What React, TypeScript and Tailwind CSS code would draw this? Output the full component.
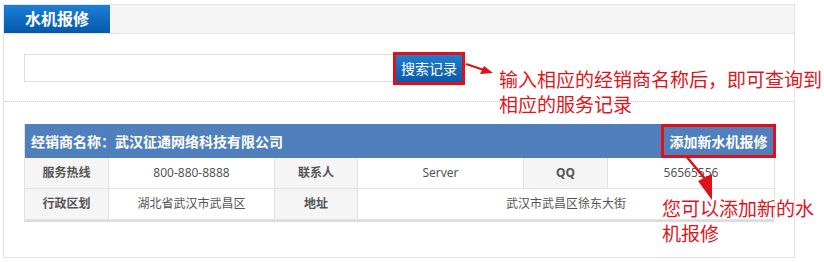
import React from "react";

const font = { fontFamily: '"Noto Sans", "Noto Sans CJK SC", sans-serif' };

function Label({ children }: { children: React.ReactNode }) {
  return (
    <div className="flex items-center justify-center bg-[#f5f5f5] border-r border-b border-[#e2e2e2] text-[12px] font-bold text-[#555]">
      {children}
    </div>
  );
}

function Value({ children, span }: { children: React.ReactNode; span?: boolean }) {
  return (
    <div
      className={
        "flex items-center justify-center bg-white border-r border-b border-[#e2e2e2] text-[12px] text-[#555] " +
        (span ? "col-span-3" : "")
      }
    >
      {children}
    </div>
  );
}

export default function App() {
  return (
    <div className="relative w-[824px] h-[262px] bg-white overflow-hidden" style={font}>
      <div className="ml-[3px] mt-[4px] w-[792px] h-[254px] border border-[#e3e3e3] flex flex-col">
        {/* header */}
        <div className="h-[29px] bg-[#f5f5f5] border-b border-[#e3e3e3] flex">
          <div className="w-[106px] h-full bg-gradient-to-b from-[#1b80d6] to-[#0558aa] flex items-center justify-center text-white text-[16px] font-bold">
            水机报修
          </div>
        </div>

        {/* search row */}
        <div className="flex items-center pl-[20px] mt-[20px] h-[28px]">
          <div className="w-[370px] h-[28px] border border-[#dcdcdc] bg-white" />
          <div className="ml-[2px] w-[66px] h-[27px] bg-gradient-to-b from-[#1f7fd0] to-[#0a5aa8] outline-[3px] outline-solid outline-[#e01018] flex items-center justify-center text-white text-[14px]">
            搜索记录
          </div>
        </div>

        <div className="mt-[19px] border-t border-dotted border-[#c8c8c8]" />

        {/* table */}
        <div className="ml-[20px] mt-[22px] w-[750px] border-l border-[#e2e2e2] border-b-2 border-b-[#dcdcdc]">
          <div className="h-[34px] bg-[#4f7fbd] flex items-center justify-between pl-[6px]">
            <span className="text-white text-[14px] font-bold">经销商名称：武汉征通网络科技有限公司</span>
            <span className="relative mr-[-2px] h-[34px] w-[115px] border-[3px] border-[#e01018] flex items-center justify-center text-white text-[14px] font-bold">
              添加新水机报修
            </span>
          </div>
          <div className="grid grid-cols-[84px_166px_83px_166px_84px_167px] grid-rows-[31px_31px]">
            <Label>服务热线</Label>
            <Value>800-880-8888</Value>
            <Label>联系人</Label>
            <Value>Server</Value>
            <Label>QQ</Label>
            <Value>56565556</Value>
            <Label>行政区划</Label>
            <Value>湖北省武汉市武昌区</Value>
            <Label>地址</Label>
            <Value span>武汉市武昌区徐东大街</Value>
          </div>
        </div>
      </div>

      {/* annotations */}
      <svg className="absolute left-0 top-0" width="824" height="262" viewBox="0 0 824 262">
        <line x1="466" y1="64" x2="484" y2="70" stroke="#e01018" strokeWidth="2" />
        <polygon points="493,73 480,74 484,66" fill="#e01018" />
        <line x1="686" y1="156" x2="706" y2="180" stroke="#e01018" strokeWidth="2.5" />
        <polygon points="712,200 698,181 712,174" fill="#e01018" />
      </svg>
      <div className="absolute left-[499px] top-[68px] text-[19px] leading-[25px] text-[#e0151b] w-[325px]">
        <div>输入相应的经销商名称后，即可查询到</div>
        <div>相应的服务记录</div>
      </div>
      <div className="absolute left-[662px] top-[197px] text-[19px] leading-[25px] text-[#e0151b] w-[160px]">
        <div>您可以添加新的水</div>
        <div>机报修</div>
      </div>
    </div>
  );
}
